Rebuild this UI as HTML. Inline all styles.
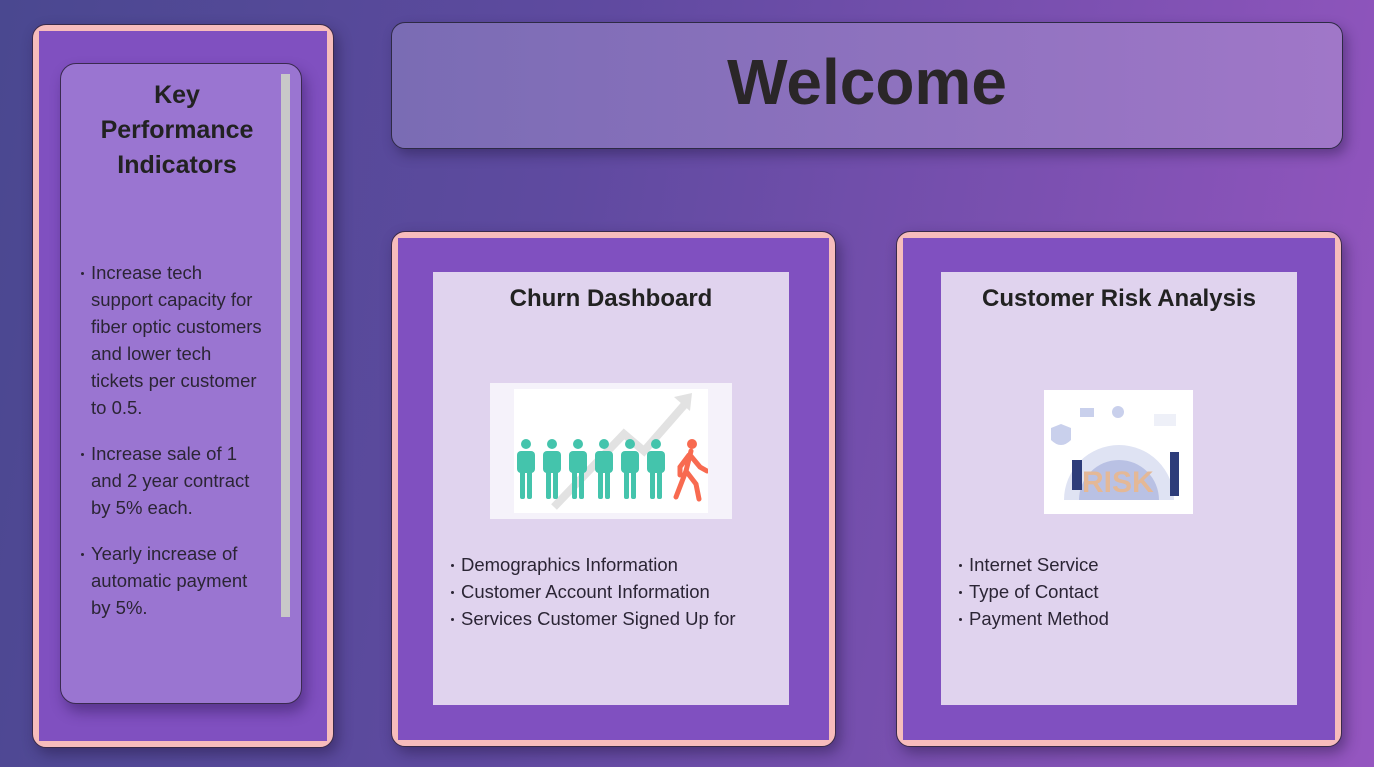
<!DOCTYPE html>
<html><head><meta charset="utf-8"><style>
*{margin:0;padding:0;box-sizing:border-box}
body{width:1374px;height:767px;overflow:hidden;background:linear-gradient(100deg,#4a4890 0%,#5f4aa0 40%,#7a50b0 70%,#9556c0 100%);font-family:"Liberation Sans",sans-serif;color:#2a2530;position:relative}
.abs{position:absolute}
.card{position:absolute;background:#f7bcbc;border:1px solid #3a2a4a;border-radius:14px;box-shadow:4px 6px 14px rgba(30,20,60,.45)}
.card .in{position:absolute;left:6px;top:6px;right:6px;bottom:6px;background:#8050c0}
.panel{position:absolute;background:#e0d3ee}
.panel h2{text-align:center;font-size:24px;font-weight:bold;color:#222;margin-top:13px}
ul{list-style:none}
li{position:relative;padding-left:12px;font-size:18.5px;line-height:27px;color:#2b2535;white-space:nowrap}
li:before{content:"";position:absolute;left:2px;top:13px;width:3px;height:3px;background:#2b2535;border-radius:50%}
</style></head><body>
<div class="card" style="left:32px;top:24px;width:302px;height:724px"><div class="in"></div></div>
<div class="abs" style="left:60px;top:63px;width:242px;height:641px;background:#9a75d1;border:1px solid #3a2a50;border-radius:16px;box-shadow:4px 8px 14px rgba(40,20,80,.45)">
 <div class="abs" style="left:220px;top:10px;width:9px;height:543px;background:#c8c8c8"></div>
 <div class="abs" style="left:0;top:14px;width:232px;text-align:center;font-weight:bold;font-size:25px;line-height:35px;color:#222">Key<br>Performance<br>Indicators</div>
 <ul class="abs" style="left:18px;top:195px;width:210px">
  <li>Increase tech<br>support capacity for<br>fiber optic customers<br>and lower tech<br>tickets per customer<br>to 0.5.</li>
  <li style="margin-top:19px">Increase sale of 1<br>and 2 year contract<br>by 5% each.</li>
  <li style="margin-top:19px">Yearly increase of<br>automatic payment<br>by 5%.</li>
 </ul>
</div>
<div class="abs" style="left:391px;top:22px;width:952px;height:127px;border:1px solid #2e2a45;border-radius:14px;background:linear-gradient(90deg,#7a6cb4,#a077c8);box-shadow:4px 6px 12px rgba(30,20,60,.4);text-align:center;font-weight:bold;font-size:64px;line-height:118px;color:#2a2628">Welcome</div>

<div class="card" style="left:391px;top:231px;width:445px;height:516px"><div class="in"></div></div>
<div class="panel" style="left:433px;top:272px;width:356px;height:433px">
 <h2>Churn Dashboard</h2>
 <div class="abs" style="left:57px;top:111px;width:242px;height:136px;background:#f5f2fa">
  <div class="abs" style="left:24px;top:6px;width:194px;height:124px;background:#fff">
   <svg width="194" height="124" viewBox="0 0 194 124">
    <polyline points="40,118 110,45 130,62 172,14" fill="none" stroke="#e2e2e2" stroke-width="8"/>
    <polygon points="160,8 178,4 176,22" fill="#e2e2e2"/>
    <g fill="#44c4ac">
     <g id="p"><circle cx="12" cy="55" r="5"/><rect x="3" y="62" width="18" height="22" rx="4"/><rect x="6" y="78" width="5" height="32" rx="2"/><rect x="13" y="78" width="5" height="32" rx="2"/></g>
     <use href="#p" x="26"/><use href="#p" x="52"/><use href="#p" x="78"/><use href="#p" x="104"/><use href="#p" x="130"/>
    </g>
    <g stroke="#f86a50" stroke-width="5" stroke-linecap="round" fill="none"><path d="M177 62 L172 82 L162 108 M172 82 L182 95 L185 110 M176 66 L186 78 L193 82 M175 66 L166 78 L166 86"/></g>
    <circle cx="178" cy="55" r="5" fill="#f86a50"/>
   </svg>
  </div>
 </div>
 <ul class="abs" style="left:16px;top:279px">
  <li>Demographics Information</li><li>Customer Account Information</li><li>Services Customer Signed Up for</li>
 </ul>
</div>

<div class="card" style="left:896px;top:231px;width:446px;height:516px"><div class="in"></div></div>
<div class="panel" style="left:941px;top:272px;width:356px;height:433px">
 <h2>Customer Risk Analysis</h2>
 <div class="abs" style="left:103px;top:118px;width:149px;height:124px;background:#fff">
  <svg width="149" height="124" viewBox="0 0 149 124">
   <path d="M20 110 A55 55 0 0 1 130 110 Z" fill="#dfe3f3"/>
   <path d="M35 110 A40 40 0 0 1 115 110 Z" fill="#b9c1e4"/>
   <path d="M7 38 L17 34 L27 38 L27 50 Q17 60 7 50 Z" fill="#c9d0ec"/>
   <rect x="36" y="18" width="14" height="9" fill="#c9d0ec"/>
   <circle cx="74" cy="22" r="6" fill="#c9d0ec"/>
   <rect x="110" y="24" width="22" height="12" fill="#eef0f8"/>
   <text x="38" y="102" font-family="Liberation Sans" font-weight="bold" font-size="30" fill="#e4b896">RISK</text>
   <rect x="28" y="70" width="10" height="30" fill="#2e3d7a"/>
   <rect x="126" y="62" width="9" height="44" fill="#2e3d7a"/>
  </svg>
 </div>
 <ul class="abs" style="left:16px;top:279px">
  <li>Internet Service</li><li>Type of Contact</li><li>Payment Method</li>
 </ul>
</div>
</body></html>
